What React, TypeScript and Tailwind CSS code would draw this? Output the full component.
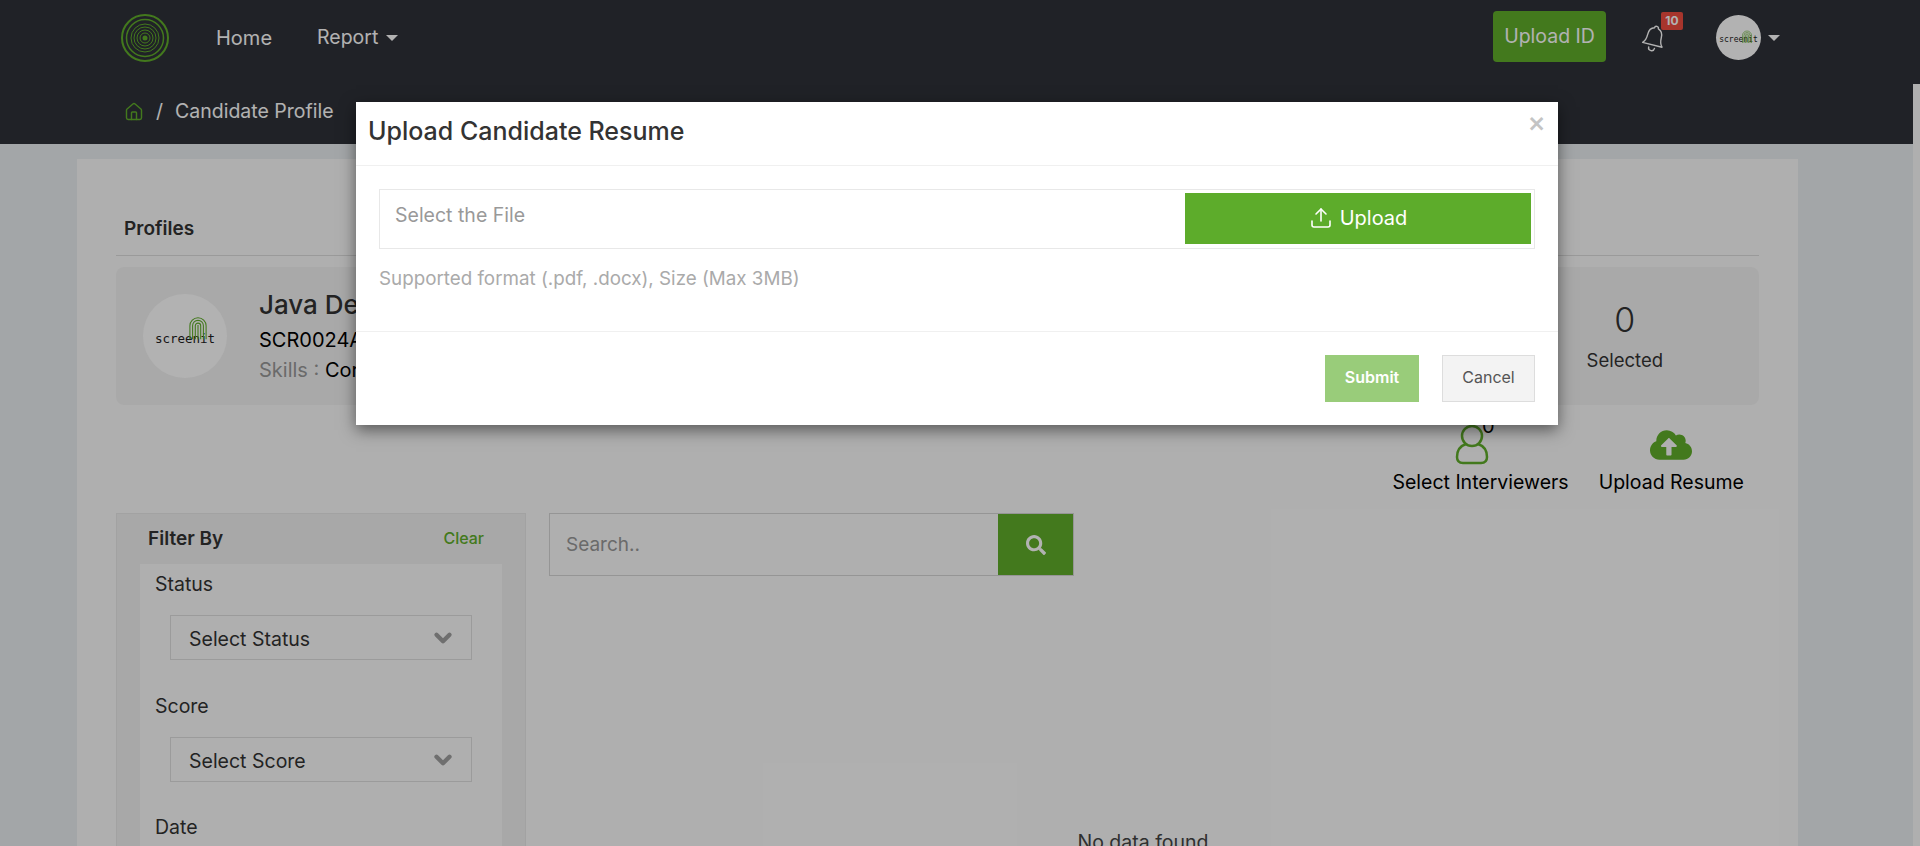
import { ChevronDown, House, Upload } from "lucide-react";
import { FaCloudUploadAlt, FaSearch } from "react-icons/fa";

function Caret({ className }: { className: string }) {
  return <span className={`inline-block border-x-[6px] border-t-[6px] border-x-transparent ${className}`} />;
}

function Logo() {
  return (
    <svg width="50" height="50" viewBox="0 0 50 50" fill="none" stroke="#60ae2a">
      <circle cx="25" cy="25" r="23" strokeWidth="2" />
      <circle cx="25" cy="25" r="18.5" strokeWidth="1.5" />
      <circle cx="25" cy="25" r="14" strokeWidth="1" />
      <circle cx="25" cy="25" r="11" strokeWidth="1" />
      <circle cx="25" cy="25" r="8" strokeWidth="1" />
      <circle cx="25" cy="25" r="5" strokeWidth="1" />
      <circle cx="25" cy="25" r="2.5" fill="#60ae2a" stroke="none" />
    </svg>
  );
}

function BrandMark({ w, h, text, pos }: { w: number; h: number; text: string; pos: string }) {
  return (
    <div className="relative flex h-full w-full items-center justify-center">
      <span className={`font-['DejaVu_Sans_Mono',monospace] text-[#222] ${text}`}>screenit</span>
      <svg className={`absolute ${pos}`} width={w} height={h} viewBox="0 0 20 26" fill="none" stroke="#60ae2a" strokeWidth="1.2">
        <path d="M1 25V10a9 9 0 0 1 18 0v15M4 25V10a6 6 0 0 1 12 0v15M7 25V10a3 3 0 0 1 6 0v15M10 25V9" />
      </svg>
    </div>
  );
}

function Select({ label }: { label: string }) {
  return (
    <div className="ml-[15px] flex h-[45px] w-[302px] items-center justify-between border border-[#dedede] pl-[18px] pr-[15px] text-[19.5px] text-[#333]">
      <span className="mt-[4px]">{label}</span>
      <ChevronDown size={26} strokeWidth={4} className="text-[#a0a0a0]" />
    </div>
  );
}

function Bell() {
  return (
    <svg width="26" height="30" viewBox="0 0 26 30" fill="none" stroke="#fff" strokeWidth="1.4" strokeLinejoin="round" strokeLinecap="round">
      <g transform="rotate(14 13 15)">
        <path d="M13 3a2 2 0 0 1 2 2c3.500 1 5 4 5 8 0 4 1 7 3 9H3c2-2 3-5 3-9 0-4 1.500-7 5-8a2 2 0 0 1 2-2Z" />
        <path d="M10 25a3 3 0 0 0 6 0" />
      </g>
    </svg>
  );
}

export default function App() {
  return (
    <div className="relative h-[846px] overflow-hidden bg-[#eaeef1] font-['Inter',sans-serif] text-[19.5px] text-[#333]">
      <header className="h-[144px] bg-[#2f3239] text-white">
        <div className="flex h-[76px] items-center pl-[120px] pr-[140px]">
          <Logo />
          <a className="ml-[46px] -mt-[1px] text-[20px]">Home</a>
          <a className="ml-[45px] -mt-[1px] flex items-center gap-[8px] text-[19.5px]">
            Report <Caret className="border-t-white" />
          </a>
          <div className="ml-auto -mt-[3px] flex h-[51px] w-[113px] items-center justify-center rounded bg-[#60ae2a] text-[19.5px]">Upload ID</div>
          <div className="relative ml-[35px]">
            <Bell />
            <span className="absolute left-[20px] -top-[11px] flex h-[18px] w-[22px] items-center justify-center rounded-[2px] bg-[#f04d3f] text-[12px] font-bold">10</span>
          </div>
          <div className="ml-[49px] -mt-[1px] h-[45px] w-[45px] overflow-hidden rounded-full bg-white">
            <BrandMark w={10} h={14} pos="left-[58%] top-[34%]" text="text-[8px] font-medium mt-[5px]" />
          </div>
          <Caret className="ml-[7px] border-t-white" />
        </div>
        <div className="flex h-[68px] items-center pb-0 pl-[124px] pt-[3px] text-[19.5px]">
          <House size={20} strokeWidth={1.7} className="text-[#60ae2a]" />
          <span className="ml-[12px]">/</span>
          <span className="ml-[12px]">Candidate Profile</span>
        </div>
      </header>

      <main className="ml-[77px] mt-[15px] h-[687px] w-[1721px] bg-[#fbfbfb] px-[39px]">
        <div className="flex h-[97px] items-end border-b border-[#ddd] pb-[12px] pl-[8px] text-[19px] font-semibold">Profiles</div>
        <section className="mt-[11px] flex h-[138px] items-center rounded-lg bg-[#f3f3f3] pl-[27px]">
          <div className="h-[84px] w-[84px] overflow-hidden rounded-full bg-white">
            <BrandMark w={18} h={25} pos="left-[55%] top-[26%]" text="text-[12.500px] font-medium mt-[7px]" />
          </div>
          <div className="ml-[32px] leading-none">
            <div className="text-[26px] font-medium">Java Developer</div>
            <div className="mt-[12px] text-[20px] text-black">SCR0024A</div>
            <div className="mt-[10px] text-[20px] text-[#999]">Skills : <span className="text-black">Core Java</span></div>
          </div>
          <div className="ml-auto mr-[96px] flex flex-col items-center">
            <span className="text-[34px] font-light leading-none">0</span>
            <span className="mt-[14px] text-[18.500px] leading-none">Selected</span>
          </div>
        </section>
        <div className="flex h-[108px] justify-end gap-[30px] pr-[15px] pt-[20px] text-[19.5px] text-black">
          <div className="flex flex-col items-center">
            <div className="relative mr-[17px] h-[40px]">
              <svg width="34" height="40" viewBox="0 0 34 40" fill="none" stroke="#60ae2a" strokeWidth="2.500">
                <circle cx="17" cy="11" r="10" />
                <path d="M11 19C5 21 2 25 2 32c0 4 2 6 6 6h18c4 0 6-2 6-6 0-7-3-11-9-13" />
              </svg>
              <span className="absolute left-[27px] -top-[14px] text-[20px]">0</span>
            </div>
            <span className="mt-[3px]">Select Interviewers</span>
          </div>
          <div className="flex flex-col items-center">
            <FaCloudUploadAlt className="h-[40px] w-[42px] text-[#60ae2a]" />
            <span className="mt-[3px]">Upload Resume</span>
          </div>
        </div>
        <div className="flex gap-[23px]">
          <aside className="h-[400px] w-[410px] border border-[#e8e8e8] bg-[#f1f1f1] px-[23px]">
            <div className="flex h-[50px] items-center justify-between pl-[8px] pr-[18px]">
              <span className="text-[19px] font-semibold">Filter By</span>
              <span className="-mt-[2px] text-[16px] font-medium text-[#60ae2a]">Clear</span>
            </div>
            <div className="h-[350px] bg-[#fbfbfb] pl-[15px] pt-[8px]">
              <div className="leading-[24px]">Status</div>
              <div className="mt-[19px]"><Select label="Select Status" /></div>
              <div className="mt-[34px] leading-[24px]">Score</div>
              <div className="mt-[19px]"><Select label="Select Score" /></div>
              <div className="mt-[33px] leading-[24px]">Date</div>
            </div>
          </aside>
          <div className="flex-1">
            <div className="flex h-[63px] w-[525px] border border-[#d6d6d6]">
              <div className="flex flex-1 items-center pl-[16px] pt-[1px] text-[19px] text-[#999]">Search..</div>
              <div className="flex w-[75px] items-center justify-center bg-[#60ae2a] text-white"><FaSearch className="text-[20px]" /></div>
            </div>
            <div className="mt-[252px] pr-[22px] text-center text-[19.5px] text-[#444]">No data found</div>
          </div>
        </div>
      </main>

      <div className="absolute right-0 top-[84px] h-[762px] w-[7px] bg-[#fbfbfb]" />
      <div className="absolute inset-0 bg-black/30" />

      <div className="absolute left-[356px] top-[102px] h-[323px] w-[1202px] bg-white shadow-[0_5px_15px_rgba(0,0,0,0.5)]">
        <div className="relative flex h-[64px] items-center border-b border-[#f0f0f0] pb-[5px] pl-[12px]">
          <h2 className="text-[25px] font-medium leading-none text-[#333]">Upload Candidate Resume</h2>
          <span className="absolute right-[12px] top-[7px] text-[28px] font-medium leading-[27px] text-[#c4c4c4]">×</span>
        </div>
        <div className="h-[166px] border-b border-[#f0f0f0] px-[23px] pt-[23px]">
          <div className="flex h-[60px] items-center justify-between border border-[#e8e8e8] pl-[15px] pr-[3px]">
            <span className="-mt-[6px] text-[19.5px] text-[#999]">Select the File</span>
            <button className="-mt-[2px] flex h-[51px] w-[346px] items-center justify-center gap-[7px] bg-[#5dac2b] text-[20px] text-white">
              <Upload size={24} strokeWidth={1.6} /> Upload
            </button>
          </div>
          <p className="mt-[16px] text-[18.800px] text-[#aaa]">Supported format (.pdf, .docx), Size (Max 3MB)</p>
        </div>
        <div className="flex justify-end gap-[23px] pr-[23px] pt-[23px]">
          <button className="h-[47px] w-[94px] bg-[#99cc7a] pb-[4px] text-[16px] font-semibold text-white">Submit</button>
          <button className="h-[47px] w-[93px] border border-[#ddd] bg-[#f3f3f3] pb-[4px] text-[16px] text-[#555]">Cancel</button>
        </div>
      </div>
    </div>
  );
}
